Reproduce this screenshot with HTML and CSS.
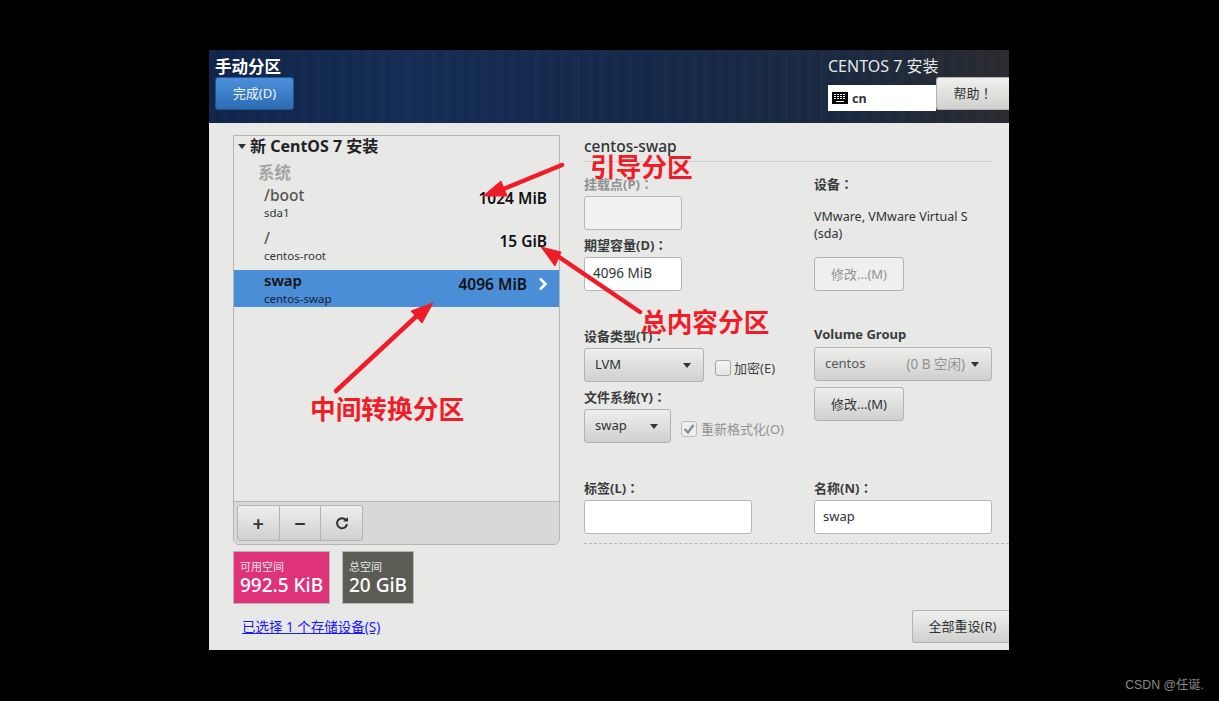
FILE: index.html
```html
<!DOCTYPE html>
<html lang="zh-CN">
<head>
    <meta charset="UTF-8">
    <title>手动分区</title>
    <link rel="stylesheet" href="styles.css">
</head>
<body>

<div class="window">
    <header class="topbar">
        <div class="topbar-left">
            <h1>手动分区</h1>
            <button class="btn-done">完成(D)</button>
        </div>
        <div class="topbar-right">
            <div class="product">CENTOS 7 安装</div>
            <div class="topbar-row">
                <div class="layout-box">
                    <svg class="kbd-icon" viewBox="0 0 16 12" width="16" height="12">
                        <rect width="16" height="12" fill="#000"/>
                        <path d="M2 2.5h12M2 4.5h12M2 6.5h12" stroke="#fff" stroke-width="1" stroke-dasharray="2 1"/>
                        <path d="M4 9.5h8" stroke="#fff" stroke-width="1"/>
                    </svg>
                    <span>cn</span>
                </div>
                <button class="btn btn-help">帮助<span class="punct">！</span></button>
            </div>
        </div>
    </header>

    <main class="content">
        <section class="left">
            <div class="panel">
                <div class="panel-body">
                    <div class="panel-title"><span class="tri"></span>新 CentOS 7 安装</div>
                    <div class="group-name">系统</div>
                    <div class="mount">
                        <div>
                            <div class="mount-name">/boot</div>
                            <div class="mount-dev">sda1</div>
                        </div>
                        <div class="mount-size">1024 MiB</div>
                    </div>
                    <div class="mount">
                        <div>
                            <div class="mount-name">/</div>
                            <div class="mount-dev">centos-root</div>
                        </div>
                        <div class="mount-size">15 GiB</div>
                    </div>
                    <div class="mount mount-selected">
                        <div>
                            <div class="mount-name">swap</div>
                            <div class="mount-dev">centos-swap</div>
                        </div>
                        <div class="mount-size">4096 MiB</div>
                        <svg class="chevron" viewBox="0 0 10 14" width="10" height="14">
                            <path d="M2 1.5 7.5 7 2 12.5" fill="none" stroke="#fff" stroke-width="2.6"/>
                        </svg>
                    </div>
                </div>
                <div class="panel-toolbar">
                    <div class="tool-group">
                        <button class="tool">+</button>
                        <button class="tool">−</button>
                        <button class="tool">
                            <svg viewBox="0 0 14 14" width="14" height="14">
                                <path d="M11 4.2A5 5 0 1 0 12 8" fill="none" stroke="#2e3436" stroke-width="2"/>
                                <path d="M8 5.6h5V1z" fill="#2e3436"/>
                            </svg>
                        </button>
                    </div>
                </div>
            </div>

            <div class="tiles">
                <div class="tile tile-free">
                    <div class="tile-label">可用空间</div>
                    <div class="tile-value">992.5 KiB</div>
                </div>
                <div class="tile tile-total">
                    <div class="tile-label">总空间</div>
                    <div class="tile-value">20 GiB</div>
                </div>
            </div>

            <a class="storage-link" href="#">已选择 1 个存储设备(S)</a>
        </section>

        <section class="details">
            <h2 class="details-title">centos-swap</h2>

            <div class="form-row form-row-a">
                <div class="field-col">
                    <label class="lbl lbl-off">挂载点(P)<span class="punct">：</span></label>
                    <div class="input input-off"></div>
                    <label class="lbl lbl-gap">期望容量(D)<span class="punct">：</span></label>
                    <div class="input">4096 MiB</div>
                </div>
                <div class="field-col">
                    <label class="lbl">设备<span class="punct">：</span></label>
                    <div class="device-text">VMware, VMware Virtual S<br>(sda)</div>
                    <button class="btn btn-modify" disabled>修改...(M)</button>
                </div>
            </div>

            <div class="form-row form-row-b">
                <div class="field-col">
                    <label class="lbl">设备类型(T)<span class="punct">：</span></label>
                    <div class="inline-row">
                        <div class="combo combo-lvm"><span>LVM</span><span class="tri-down"></span></div>
                        <span class="check"></span>
                        <span class="check-text">加密(E)</span>
                    </div>
                    <label class="lbl lbl-fs">文件系统(Y)<span class="punct">：</span></label>
                    <div class="inline-row">
                        <div class="combo combo-fs"><span>swap</span><span class="tri-down"></span></div>
                        <span class="check check-on">
                            <svg viewBox="0 0 16 16" width="16" height="16">
                                <path d="M3.5 8 7 11.5 12.5 4" fill="none" stroke="#8b8e8f" stroke-width="2.4"/>
                            </svg>
                        </span>
                        <span class="check-text check-text-off">重新格式化(O)</span>
                    </div>
                </div>
                <div class="field-col">
                    <label class="lbl lbl-vg">Volume Group</label>
                    <div class="combo combo-vg">
                        <span>centos</span>
                        <span class="combo-free">(0 B 空闲)</span>
                        <span class="tri-down"></span>
                    </div>
                    <button class="btn btn-modify btn-modify-on">修改...(M)</button>
                </div>
            </div>

            <div class="form-row form-row-c">
                <div class="field-col">
                    <label class="lbl">标签(L)<span class="punct">：</span></label>
                    <div class="input input-label"></div>
                </div>
                <div class="field-col">
                    <label class="lbl">名称(N)<span class="punct">：</span></label>
                    <div class="input input-name">swap</div>
                </div>
            </div>

            <div class="dashed"></div>
            <div class="reset-row"><button class="btn btn-reset">全部重设(R)</button></div>
        </section>
    </main>

    <!-- annotations drawn on top of the screenshot -->
    <svg class="marks" viewBox="0 0 800 600" width="800" height="600">
        <g fill="#f01c28" stroke="#f01c28">
            <path d="M353 115 292 140" stroke-width="4.5" stroke-linecap="round"/>
            <path d="M274 146 292 131 298 146z" stroke-width="1"/>
            <path d="M431 262 347 205" stroke-width="4.5" stroke-linecap="round"/>
            <path d="M332 197 352 202 346 216z" stroke-width="1"/>
            <path d="M127 341 212 262" stroke-width="4.5" stroke-linecap="round"/>
            <path d="M224 253 202 261 213 273z" stroke-width="1"/>
        </g>
    </svg>
    <div class="note note-boot">引导分区</div>
    <div class="note note-total">总内容分区</div>
    <div class="note note-swap">中间转换分区</div>
</div>

<div class="watermark">CSDN @任诞.</div>

</body>
</html>
```

FILE: styles.css
```css
* {
    box-sizing: border-box;
}

body {
    margin: 0;
    height: 701px;
    padding: 50px 0 0 209px;
    background-color: #000;
    font-family: 'Noto Sans', 'Noto Sans CJK SC', sans-serif;
    font-size: 13px;
    color: #2e3436;
    overflow: hidden;
    position: relative;
}

button {
    font-family: inherit;
}

/* fullwidth colon and ! sit centred in the reference */
.punct {
    font-family: 'Noto Sans CJK TC', sans-serif;
    font-feature-settings: "locl" 0;
}

.window {
    position: relative;
    width: 800px;
    height: 600px;
    background-color: #e8e8e7;
    overflow: hidden;
}

/* top bar */
.topbar {
    height: 73px;
    display: flex;
    justify-content: space-between;
    color: #fff;
    background:
        repeating-linear-gradient(90deg, rgba(255, 255, 255, 0.006) 0 7px, rgba(0, 0, 0, 0.03) 7px 13px),
        linear-gradient(90deg, #10254a 0%, #152d55 25%, #15294b 55%, #1c2a40 80%, #2a2b2f 100%);
}

.topbar-left {
    padding: 6px 0 0 6px;
}

.topbar-left h1 {
    margin: 0;
    font-size: 16.5px;
    line-height: 21px;
    font-weight: 700;
}

.btn-done {
    display: block;
    width: 79px;
    height: 33px;
    padding: 0 0 2px;
    color: #eef4fb;
    font-size: 13px;
    background: linear-gradient(#4a90d9, #2f6cb4);
    border: 1px solid #1f5595;
    border-radius: 3px;
}

.topbar-right {
    width: 181px;
    padding-top: 5px;
}

.product {
    font-size: 16px;
    line-height: 22px;
    color: #e8e8e8;
}

.topbar-row {
    display: flex;
    align-items: flex-start;
}

.layout-box {
    width: 108px;
    height: 26px;
    margin-top: 8px;
    padding-left: 4px;
    display: flex;
    align-items: center;
    gap: 4px;
    background-color: #fff;
    color: #2e3436;
    font-weight: 700;
    font-size: 12.5px;
}

.btn {
    color: #2e3436;
    font-size: 13px;
    padding: 0 0 2px;
    background: linear-gradient(#f0f0ef, #d0d0ce);
    border: 1px solid #b2b2b0;
    border-radius: 3px;
}

.btn-help {
    width: 73px;
    height: 33px;
    border-right: none;
    border-radius: 3px 0 0 3px;
}

/* main area */
.content {
    display: flex;
    height: 527px;
    padding: 12px 0 0 24px;
    gap: 24px;
}

.left {
    width: 327px;
}

.panel {
    height: 410px;
    display: flex;
    flex-direction: column;
    border: 1px solid #b6b6b4;
    border-radius: 0 0 6px 6px;
}

.panel-body {
    flex: 1;
}

.panel-title {
    height: 21px;
    padding-left: 4px;
    display: flex;
    align-items: center;
    font-size: 16px;
    line-height: 21px;
    font-weight: 700;
    color: #1f2224;
}

.tri {
    width: 0;
    height: 0;
    margin-right: 4px;
    border-left: 4px solid transparent;
    border-right: 4px solid transparent;
    border-top: 5px solid #2e3436;
}

.group-name {
    height: 27px;
    padding-left: 24px;
    font-size: 16.5px;
    line-height: 32px;
    font-weight: 700;
    color: #a5a5a3;
}

.mount {
    height: 37px;
    margin-bottom: 6px;
    padding: 0 12px 0 30px;
    display: flex;
    justify-content: space-between;
    align-items: center;
}

.mount-name {
    font-size: 15.5px;
    line-height: 20px;
    color: #555753;
    font-weight: 500;
}

.mount-dev {
    font-size: 11.5px;
    line-height: 17px;
    margin-top: -1px;
    color: #2e3436;
}

.mount-size {
    margin-top: -9px;
    font-size: 15.5px;
    font-weight: 600;
    color: #111;
}

.mount-selected {
    padding-right: 11px;
    background-color: #4a8ed8;
}

.mount-selected .mount-name {
    margin-top: -1px;
    font-size: 15px;
    color: #111;
    font-weight: 600;
}

.mount-selected .mount-dev {
    margin-top: 0;
    color: #17222d;
}

.mount-selected .mount-size {
    margin-left: auto;
    margin-right: 11px;
}

.chevron {
    margin-top: -9px;
}

.panel-toolbar {
    height: 43px;
    padding: 3px;
    background-color: #d8d8d6;
    border-top: 1px solid #b6b6b4;
    border-radius: 0 0 5px 5px;
}

.tool-group {
    display: flex;
    width: 126px;
    height: 36px;
}

.tool {
    flex: 1;
    display: flex;
    align-items: center;
    justify-content: center;
    padding: 0;
    font-size: 20px;
    font-weight: 600;
    color: #2e3436;
    background: linear-gradient(#eeeeed, #d0d0ce);
    border: 1px solid #b2b2b0;
    border-left: none;
}

.tool:first-child {
    border-left: 1px solid #b2b2b0;
    border-radius: 3px 0 0 3px;
}

.tool:last-child {
    border-radius: 0 3px 3px 0;
}

.tiles {
    display: flex;
    gap: 12px;
    margin-top: 6px;
}

.tile {
    height: 53px;
    padding: 7px 6px 0;
    color: #fff;
    border: 1px solid #b6b6b4;
}

.tile-free {
    width: 97px;
    background-color: #de337b;
}

.tile-total {
    width: 72px;
    background-color: #5c5c54;
}

.tile-label {
    font-size: 11px;
    line-height: 15px;
    opacity: 0.85;
}

.tile-value {
    font-size: 19px;
    line-height: 23px;
    font-weight: 500;
    white-space: nowrap;
}

.storage-link {
    display: inline-block;
    margin: 14px 0 0 9px;
    color: #1a1aff;
    font-size: 13.5px;
    line-height: 18px;
}

/* right side form */
.details {
    flex: 1;
    min-width: 0;
}

.details-title {
    width: 408px;
    height: 27px;
    margin: 0;
    font-size: 15.5px;
    line-height: 22px;
    font-weight: 500;
    border-bottom: 1px solid #cfcfcd;
}

.form-row {
    display: grid;
    grid-template-columns: 230px 178px;
}

.form-row-a {
    margin-top: 12px;
    height: 117px;
}

.form-row-b {
    margin-top: 35px;
    height: 117px;
}

.form-row-c {
    margin-top: 35px;
}

.field-col {
    display: flex;
    flex-direction: column;
    align-items: flex-start;
}

.lbl {
    height: 19px;
    font-size: 13px;
    line-height: 19px;
    font-weight: 700;
    color: #3a3d3f;
    margin-bottom: 3px;
}

.lbl-off {
    color: #8f9192;
}

.lbl-gap {
    margin-top: 5px;
}

.lbl-fs {
    margin-top: 5px;
}

.lbl-vg {
    margin-top: -1px;
}

.input {
    width: 98px;
    height: 34px;
    padding-left: 8px;
    line-height: 30px;
    font-size: 13.5px;
    background-color: #fff;
    border: 1px solid #b6b6b4;
    border-radius: 3px;
}

.input-off {
    background-color: #f1f1f0;
}

.input-label {
    width: 168px;
}

.input-name {
    width: 178px;
    font-size: 13px;
}

.device-text {
    height: 61px;
    padding-top: 12px;
    font-size: 12.5px;
    line-height: 17px;
}

.btn-modify {
    width: 90px;
    height: 34px;
    color: #92928f;
    background: #efefee;
}

.btn-modify-on {
    margin-top: 6px;
    color: #2e3436;
    background: linear-gradient(#eeeeed, #d0d0ce);
}

.inline-row {
    display: flex;
    align-items: center;
}

.combo {
    height: 34px;
    padding: 0 12px 2px 10px;
    display: flex;
    align-items: center;
    justify-content: space-between;
    font-size: 13px;
    background: linear-gradient(#eeeeed, #d0d0ce);
    border: 1px solid #b2b2b0;
    border-radius: 3px;
}

.combo-lvm {
    width: 120px;
}

.combo-fs {
    width: 87px;
}

.combo-vg {
    width: 178px;
    color: #555753;
}

.combo-free {
    margin-left: auto;
    margin-right: 6px;
    color: #929290;
    font-size: 13.5px;
}

.tri-down {
    width: 0;
    height: 0;
    margin-top: 2px;
    border-left: 4.5px solid transparent;
    border-right: 4.5px solid transparent;
    border-top: 5px solid #2e3436;
}

.check {
    width: 16px;
    height: 16px;
    margin: 6px 3px 0 11px;
    flex: none;
    background: linear-gradient(#f5f5f4, #e4e4e3);
    border: 1px solid #a6a6a4;
    border-radius: 3px;
}

.check svg {
    display: block;
    margin: -1px;
}

.check-on {
    margin-left: 10px;
    margin-right: 4px;
    background: #eeeeed;
    border-color: #bcbcba;
}

.check-text {
    margin-top: 4px;
    font-size: 13px;
    white-space: nowrap;
    color: #3f4345;
}

.check-text-off {
    color: #929290;
}

.dashed {
    height: 0;
    margin-top: 9px;
    border-top: 1px dashed #b6b6b4;
}

.reset-row {
    display: flex;
    justify-content: flex-end;
    margin-top: 66px;
}

.btn-reset {
    width: 97px;
    height: 33px;
    padding-left: 3px;
    border-right: none;
    border-radius: 3px 0 0 3px;
}

/* red notes over the picture */
.marks {
    position: absolute;
    left: 0;
    top: 0;
}

.note {
    position: absolute;
    font-family: 'Noto Sans CJK SC', sans-serif;
    font-size: 25.7px;
    line-height: 34px;
    font-weight: 700;
    color: #f01c28;
    white-space: nowrap;
}

.note-boot {
    left: 381px;
    top: 99px;
}

.note-total {
    left: 432px;
    top: 254px;
}

.note-swap {
    left: 101px;
    top: 341px;
}

.watermark {
    position: absolute;
    right: 15px;
    bottom: 8px;
    font-family: 'Liberation Sans', 'Noto Sans CJK SC', sans-serif;
    font-size: 12.3px;
    line-height: 16px;
    color: #8a8a8a;
}
```
